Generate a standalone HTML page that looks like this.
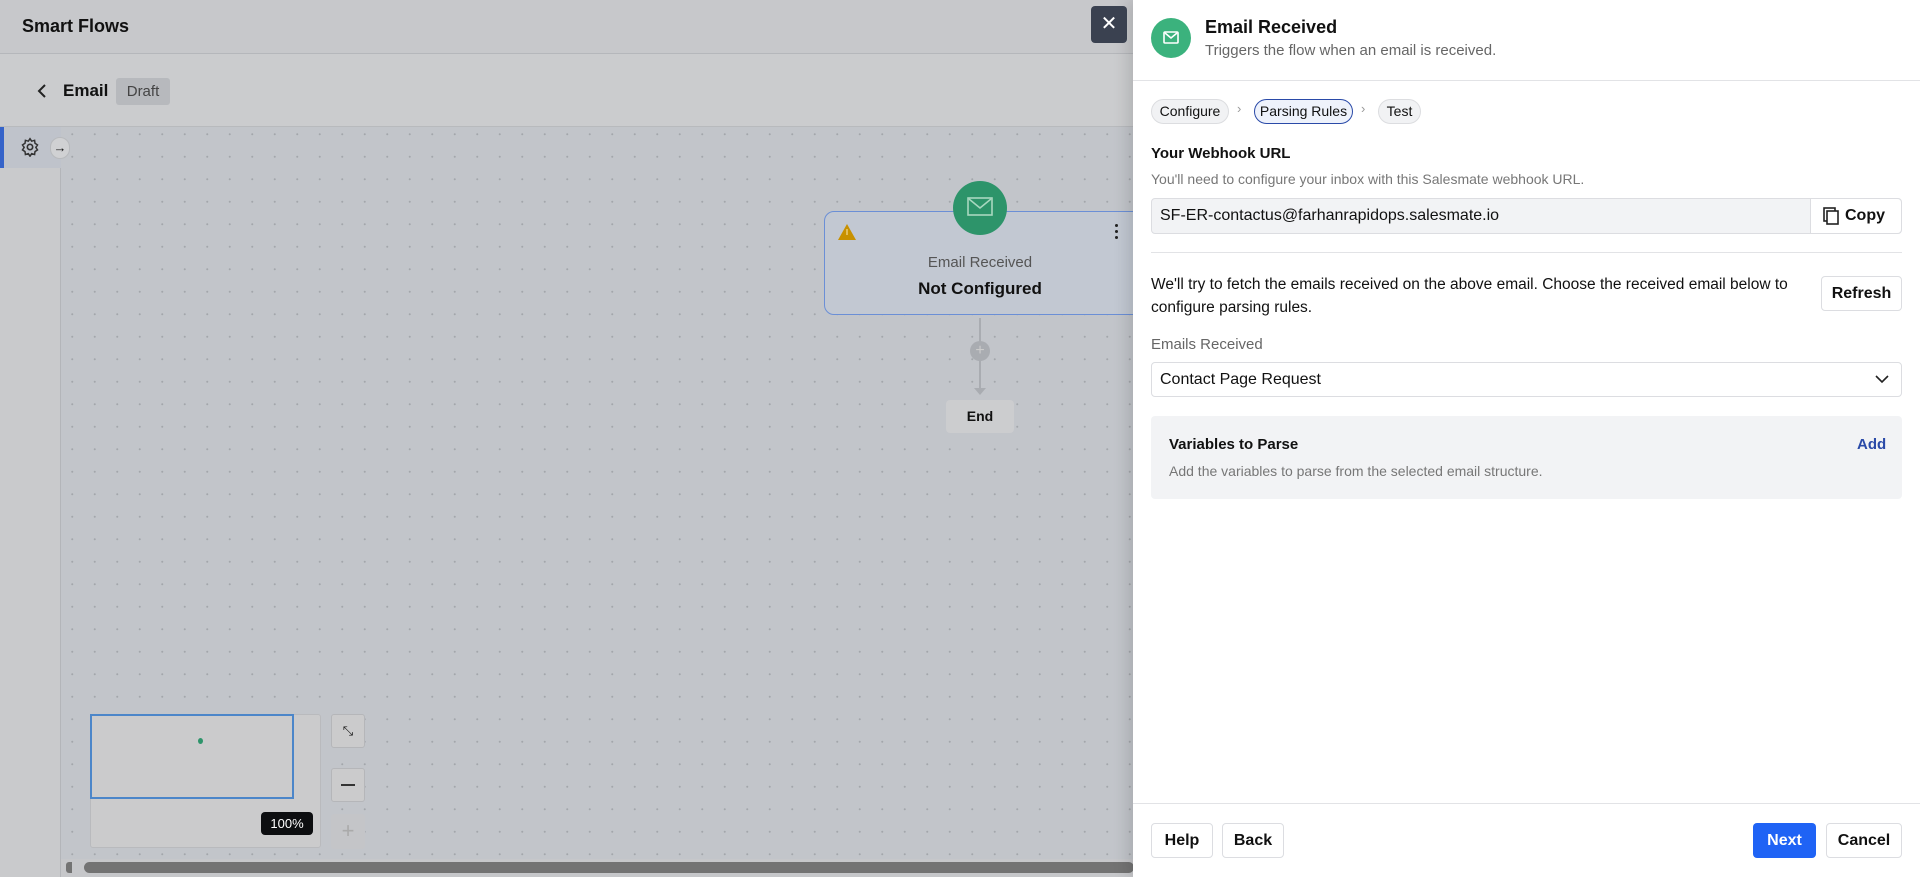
<!DOCTYPE html>
<html><head><meta charset="utf-8"><style>
*{box-sizing:border-box;margin:0;padding:0}
body{width:1920px;height:877px;overflow:hidden;font-family:"Liberation Sans",sans-serif;position:relative;background:#c3c6cb;color:#111}
.abs{position:absolute}
#top{left:0;top:0;width:1134px;height:54px;background:#c7c8cb;border-bottom:1px solid #b5b7bb}
#sub{left:0;top:54px;width:1134px;height:73px;background:#cbccce;border-bottom:1px solid #b8babd}
#canvas{left:61px;top:127px;width:1073px;height:750px;background-color:#c2c5ca;background-image:radial-gradient(circle,#a3a6ab 0.8px,transparent 1.2px);background-size:22.5px 22.5px;background-position:0 -4px}
#side{left:0;top:127px;width:61px;height:750px;background:#c9cacc;border-right:1px solid #b3b5b9}
#panel{left:1133px;top:0;width:787px;height:877px;background:#fff;box-shadow:-6px 0 14px rgba(0,0,0,.12)}
.pill{position:absolute;top:99px;height:25px;border-radius:13px;background:#f1f2f4;border:1px solid #dcdde0;font-size:14px;line-height:23px;text-align:center;color:#111}
.btn{position:absolute;border:1px solid #dcdde1;border-radius:4px;background:#fff;font-size:16px;font-weight:bold;text-align:center;color:#111}
</style></head><body>
<div id="top" class="abs"><div class="abs" style="left:22px;top:16px;font-size:18px;font-weight:bold">Smart Flows</div></div>
<div id="sub" class="abs">
<svg class="abs" style="left:36px;top:29px" width="12" height="16"><path d="M9 2L3 8l6 6" stroke="#222" stroke-width="2" fill="none"/></svg>
<div class="abs" style="left:63px;top:27px;font-size:17px;font-weight:bold">Email</div>
<div class="abs" style="left:116px;top:24px;width:54px;height:27px;background:#b7b9bd;border-radius:3px;font-size:15px;line-height:27px;text-align:center;color:#444">Draft</div>
</div>
<div id="side" class="abs"><div class="abs" style="left:0;top:0;width:61px;height:41px;background:#bfc3cb;border-left:4px solid #3563c9"></div></div>
<svg class="abs" style="left:20px;top:137px" width="20" height="20" viewBox="0 0 24 24"><circle cx="12" cy="12" r="3.2" fill="none" stroke="#333" stroke-width="2"/><path d="M12 2l2 3 3.5-1 .5 3.5 3 2-2 3 2 3-3 2-.5 3.5-3.5-1-2 3-2-3-3.5 1-.5-3.5-3-2 2-3-2-3 3-2 .5-3.5 3.5 1z" fill="none" stroke="#333" stroke-width="1.8"/></svg>
<div class="abs" style="left:50px;top:137px;width:20px;height:22px;border-radius:10px;background:#d0d1d3;border:1px solid #b8babd;z-index:3;font-size:13px;text-align:center;line-height:20px">→</div>
<div id="canvas" class="abs"></div>
<!-- node -->
<div class="abs" style="left:824px;top:211px;width:330px;height:104px;border:1px solid #6b8fd6;border-radius:10px;background:#c2c8d2"></div>
<div class="abs" style="left:953px;top:181px;width:54px;height:54px;border-radius:50%;background:#2d946a"></div>
<svg class="abs" style="left:967px;top:197px" width="26" height="20"><rect x="1" y="1" width="24" height="17" fill="none" stroke="#a8d8c0" stroke-width="1.6"/><path d="M2 2l11 9 11-9" fill="none" stroke="#a8d8c0" stroke-width="1.6"/></svg>
<svg class="abs" style="left:837px;top:223px" width="20" height="18"><path d="M10 1L19 17H1z" fill="#c89100"/><rect x="9.2" y="6" width="1.6" height="6" fill="#e8c970"/></svg>
<div class="abs" style="left:1115px;top:224px;width:4px;font-size:0"><div style="width:3px;height:3px;background:#222;border-radius:50%;margin-bottom:3px"></div><div style="width:3px;height:3px;background:#222;border-radius:50%;margin-bottom:3px"></div><div style="width:3px;height:3px;background:#222;border-radius:50%"></div></div>
<div class="abs" style="left:880px;top:254px;width:200px;text-align:center;font-size:15px;color:#555">Email Received</div>
<div class="abs" style="left:880px;top:279px;width:200px;text-align:center;font-size:17px;font-weight:bold">Not Configured</div>
<div class="abs" style="left:979px;top:318px;width:2px;height:72px;background:#a9acb1"></div>
<div class="abs" style="left:970px;top:341px;width:20px;height:20px;border-radius:50%;background:#a9acb1;color:#ccc;font-size:16px;line-height:19px;text-align:center">+</div>
<svg class="abs" style="left:974px;top:388px" width="12" height="8"><path d="M0 0h12L6 7z" fill="#a9acb1"/></svg>
<div class="abs" style="left:946px;top:400px;width:68px;height:33px;background:#cccdcf;border-radius:4px;font-size:14px;font-weight:bold;text-align:center;line-height:33px">End</div>
<!-- minimap -->
<div class="abs" style="left:90px;top:714px;width:231px;height:134px;background:#cbcbcc;border:1px solid #b9babd;border-radius:3px"></div>
<div class="abs" style="left:90px;top:714px;width:204px;height:85px;border:2px solid #4c86c9"></div>
<div class="abs" style="left:198px;top:738px;width:5px;height:6px;border-radius:50%;background:#2d946a"></div>
<div class="abs" style="left:261px;top:812px;width:52px;height:23px;background:#0d0e10;border-radius:4px;color:#fff;font-size:13px;text-align:center;line-height:23px">100%</div>
<div class="abs" style="left:331px;top:714px;width:34px;height:34px;background:#cbcbcc;border:1px solid #b5b6b9;border-radius:3px;font-size:13px;text-align:center;line-height:32px">⤡</div>
<div class="abs" style="left:331px;top:768px;width:34px;height:34px;background:#cbcbcc;border:1px solid #b5b6b9;border-radius:3px"><div style="margin:15px 9px;width:14px;height:2px;background:#333"></div></div>
<div class="abs" style="left:331px;top:814px;width:34px;height:35px;background:#c4c5c8;border-radius:3px;color:#aaa;font-size:22px;text-align:center;line-height:33px">+</div>
<div class="abs" style="left:61px;top:859px;width:1073px;height:18px;background:#c6c7ca"></div>
<div class="abs" style="left:66px;top:862px;width:6px;height:11px;background:#737373;border-radius:3px 0 0 3px"></div>
<div class="abs" style="left:84px;top:862px;width:1050px;height:11px;background:#737373;border-radius:6px"></div>
<div class="abs" style="left:1091px;top:6px;width:36px;height:37px;background:#3a4150;border-radius:4px;color:#fff;font-size:20px;text-align:center;line-height:36px;z-index:5">✕</div>
<!-- panel -->
<div id="panel" class="abs">
<div class="abs" style="left:18px;top:18px;width:40px;height:40px;border-radius:50%;background:#3bb27d"></div>
<svg class="abs" style="left:30px;top:31px" width="16" height="13"><rect x="1" y="1" width="14" height="11" fill="none" stroke="#fff" stroke-width="1.6" rx="1"/><path d="M2 2l6 5 6-5" fill="none" stroke="#fff" stroke-width="1.6"/></svg>
<div class="abs" style="left:72px;top:17px;font-size:18px;font-weight:bold">Email Received</div>
<div class="abs" style="left:72px;top:42px;font-size:15px;color:#666">Triggers the flow when an email is received.</div>
<div class="abs" style="left:0;top:80px;width:787px;height:1px;background:#e2e3e6"></div>
<div class="pill" style="left:18px;width:78px">Configure</div>
<div class="abs" style="left:104px;top:101px;color:#999;font-size:13px">›</div>
<div class="pill" style="left:121px;width:99px;background:#eef2fb;border:1.5px solid #2a4aa8">Parsing Rules</div>
<div class="abs" style="left:228px;top:101px;color:#999;font-size:13px">›</div>
<div class="pill" style="left:245px;width:43px">Test</div>
<div class="abs" style="left:18px;top:145px;font-size:15px;font-weight:bold">Your Webhook URL</div>
<div class="abs" style="left:18px;top:171px;font-size:14px;color:#777">You'll need to configure your inbox with this Salesmate webhook URL.</div>
<div class="abs" style="left:18px;top:198px;width:751px;height:36px;background:#f2f3f5;border:1px solid #dcdde1;border-radius:4px"></div>
<div class="abs" style="left:27px;top:207px;font-size:16px">SF-ER-contactus@farhanrapidops.salesmate.io</div>
<div class="abs" style="left:677px;top:199px;width:91px;height:34px;background:#fff;border-left:1px solid #dcdde1;border-radius:0 4px 4px 0"></div>
<svg class="abs" style="left:690px;top:207px" width="16" height="18"><rect x="1" y="1" width="11" height="13" fill="none" stroke="#222" stroke-width="1.6"/><rect x="4" y="4" width="11" height="13" fill="#fff" stroke="#222" stroke-width="1.6"/></svg>
<div class="abs" style="left:712px;top:207px;font-size:16px;font-weight:bold">Copy</div>
<div class="abs" style="left:18px;top:252px;width:751px;height:1px;background:#e2e3e6"></div>
<div class="abs" style="left:18px;top:273px;width:660px;font-size:15.5px;line-height:23px">We'll try to fetch the emails received on the above email. Choose the received email below to configure parsing rules.</div>
<div class="btn" style="left:688px;top:276px;width:81px;height:35px;line-height:33px">Refresh</div>
<div class="abs" style="left:18px;top:336px;font-size:15px;color:#666">Emails Received</div>
<div class="abs" style="left:18px;top:362px;width:751px;height:35px;border:1px solid #dcdde1;border-radius:4px"></div>
<div class="abs" style="left:27px;top:371px;font-size:16px">Contact Page Request</div>
<svg class="abs" style="left:742px;top:375px" width="14" height="9"><path d="M1 1l6 6 6-6" fill="none" stroke="#222" stroke-width="1.6"/></svg>
<div class="abs" style="left:18px;top:416px;width:751px;height:83px;background:#f2f3f5;border-radius:4px"></div>
<div class="abs" style="left:36px;top:436px;font-size:15px;font-weight:bold">Variables to Parse</div>
<div class="abs" style="left:724px;top:436px;font-size:15px;font-weight:bold;color:#2a4aa8">Add</div>
<div class="abs" style="left:36px;top:463px;font-size:14px;color:#777">Add the variables to parse from the selected email structure.</div>
<div class="abs" style="left:0;top:803px;width:787px;height:1px;background:#e2e3e6"></div>
<div class="btn" style="left:18px;top:823px;width:62px;height:35px;line-height:33px">Help</div>
<div class="btn" style="left:89px;top:823px;width:62px;height:35px;line-height:33px">Back</div>
<div class="btn" style="left:620px;top:823px;width:63px;height:35px;line-height:35px;background:#1f63f5;border:none;color:#fff">Next</div>
<div class="btn" style="left:693px;top:823px;width:76px;height:35px;line-height:33px">Cancel</div>
</div>
</body></html>
